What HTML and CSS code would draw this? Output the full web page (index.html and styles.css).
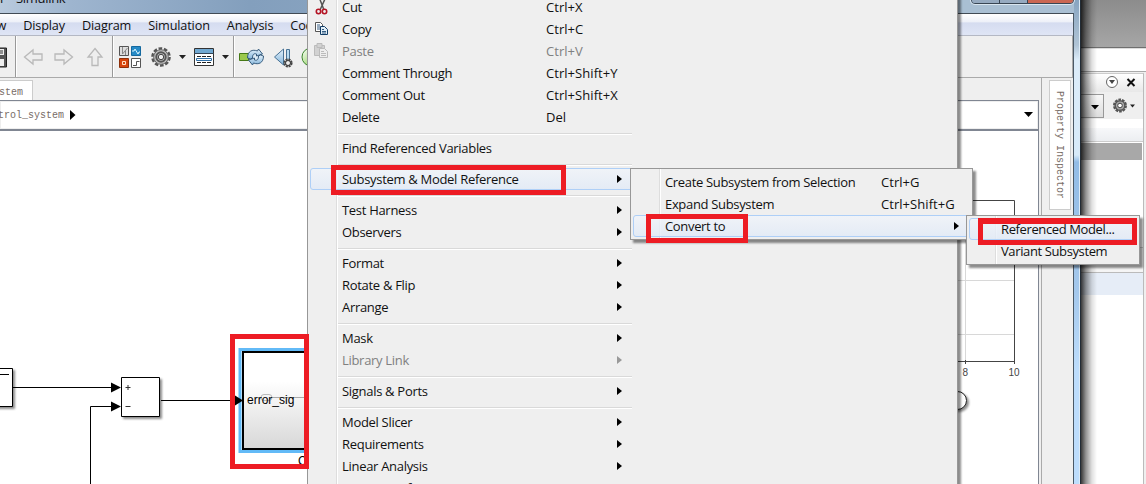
FILE: index.html
```html
<!DOCTYPE html>
<html lang="en">
<head>
<meta charset="utf-8">
<title>Simulink</title>
<link rel="stylesheet" href="styles.css">
</head>
<body>
<div class="desktop">

  <section class="back-window">
    <div class="back-title"></div>
    <div class="back-strip"></div>
    <div class="back-panel">
      <div class="panel-head">
        <svg width="34" height="18" viewBox="0 0 34 18"><circle cx="7" cy="8" r="5.500" fill="#fff" stroke="#666"/><path d="M4 6h6L7 10z" fill="#444"/><path d="M22.500 5l7 7m0-7l-7 7" stroke="#111" stroke-width="2"/></svg>
      </div>
      <div class="panel-tools">
        <div class="combo"><svg width="8" height="5"><path d="M0 0h8L4 4.500z"/></svg></div>
        <svg width="24" height="16" viewBox="0 0 24 16"><circle cx="8" cy="7.500" r="6" fill="none" stroke="#555" stroke-width="2" stroke-dasharray="2.700 1"/><circle cx="8" cy="7.500" r="4.800" fill="#aaa" stroke="#555" stroke-width="1.400"/><circle cx="8" cy="7.500" r="2.300" fill="#fff" stroke="#444"/><path d="M18 6.500h5l-2.500 3z" fill="#222"/></svg>
      </div>
      <div class="panel-gap"></div>
      <div class="panel-column"></div>
      <div class="panel-selected"></div>
      <div class="panel-body"></div>
      <div class="panel-foot"></div>
      <div class="panel-blue"></div>
    </div>
    <div class="back-shadow"></div>
  </section>

  <main class="window">
    <header class="titlebar"><span class="caption">Simulink</span><span class="caption-left">r</span>
      <div class="window-buttons"><i></i><i></i><i class="close"></i></div>
    </header>
    <div class="client">
      <nav class="menubar"><span>View</span><span>Display</span><span>Diagram</span><span>Simulation</span><span>Analysis</span><span>Code</span></nav>
      <div class="toolbar">
        <svg width="320" height="41" viewBox="0 36 320 41">
          <defs>
            <linearGradient id="green" x1="0" y1="0" x2="1" y2="1"><stop offset="0" stop-color="#fff"/><stop offset="1" stop-color="#75c737"/></linearGradient>
            <linearGradient id="blue" x1="0" y1="0" x2="0" y2="1"><stop offset="0" stop-color="#e4f2fc"/><stop offset="1" stop-color="#83b4da"/></linearGradient>
          </defs>
          <path d="M0 48h6.500v19H0" fill="#555" stroke="#222"/><path d="M0 49h4v6H0zM0 59h4v7H0z" fill="#eee"/><path d="M0 51h3M0 53h3" stroke="#333"/>
          <path d="M15.500 36v41M112.500 36v41M233.500 36v41" stroke="#999"/><path d="M16.500 36v41M113.500 36v41M234.500 36v41" stroke="#fff"/>
          <g fill="#eee" stroke="#b9b9b9" stroke-width="1.300"><path d="M24.500 57l8.500-7v4h9v6h-9v4z"/><path d="M72.500 57L64 50v4h-9v6h9v4z"/><path d="M95 48.500l7 8.500h-4v8.500h-6V57h-4z"/></g>
          <g stroke="#555"><path d="M119.500 46.500h9v9h-9z" fill="#ddd"/><path d="M131.500 46.500h9v9h-9z" fill="#268ac6" stroke="#15699f"/><path d="M119.500 58.500h9v9h-9z" fill="#d7440c" stroke="#8d300b"/><path d="M131.500 58.500h9v9h-9z" fill="#fff"/></g>
          <path d="M122.500 47v7l5-6M125.500 51v4" fill="none" stroke="#888"/><path d="M132 51h2l1-2 3 5 1-2h1" fill="none" stroke="#d9f5ff"/><path d="M122.500 61.500h3v3h-3z" fill="none" stroke="#ffe0c4"/><path d="M133 65.500h3.500v-4h3" fill="none" stroke="#555"/>
          <g fill="none"><circle cx="161" cy="57" r="8.500" stroke="#555" stroke-width="2.600" stroke-dasharray="3.600 1.740"/><circle cx="161" cy="57" r="7.300" fill="#c4c4c4" stroke="#666"/><circle cx="161" cy="57" r="4.700" stroke="#555" stroke-width="2"/><circle cx="161" cy="57" r="2.700" fill="#eee" stroke="#444"/></g>
          <path d="M179 55h7l-3.500 4zM222 55h7l-3.500 4z" fill="#222"/>
          <path d="M194.500 48.500h19v17h-19z" fill="#fff" stroke="#333"/><path d="M195 49h18v4h-18z" fill="#70a8d1"/><path d="M194 53.500h20" stroke="#345"/><path d="M197 56.500h14M197 62.500h14" stroke="#222" stroke-dasharray="4 1"/><path d="M196.500 58.500h15v2h-15z" fill="#fff" stroke="#175f9d" stroke-width=".9"/>
          <path d="M239.500 53.500h9v7h-9z" fill="#9bc84b" stroke="#467916"/>
          <circle cx="255.500" cy="57" r="5.500" fill="#dcecf7"/>
          <path d="M247.500 58c0-7 5-9 10-7l1-2 4 5-6 2 0-2c-3-1-4 1-4 4l-2 1z" fill="url(#blue)" stroke="#284f73" stroke-width=".9"/><path d="M263.500 56c0 7-5 9-10 7l-1 2-4-5 6-2v2c3 1 4-1 4-4l2-1z" fill="url(#blue)" stroke="#284f73" stroke-width=".9"/>
          <path d="M283.500 49v16l-9-8z" fill="url(#blue)" stroke="#487295"/><path d="M286.500 49.500h3v13h-3z" fill="#b9dbf0" stroke="#487295"/><circle cx="288" cy="63" r="3.500" fill="#ddd" stroke="#444" stroke-width="2.200" stroke-dasharray="2 .75"/><circle cx="288" cy="63" r="2.500" fill="#eee" stroke="#333"/>
          <circle cx="311" cy="57" r="9" fill="url(#green)" stroke="#39832b"/>
        </svg>
      </div>
      <div class="workspace">
        <div class="editor">
          <div class="tabs"><span>stem</span></div>
          <div class="breadcrumb"><span>trol_system</span><svg width="6" height="10"><path d="M0 0l5.500 5L0 10z"/></svg><svg class="drop" width="9" height="6"><path d="M0 0h9L4.500 5z"/></svg></div>
          <div class="canvas">
            <svg width="1038" height="353" viewBox="0 131 1038 353">
              <defs>
                <filter id="shadow" x="-20%" y="-20%" width="150%" height="150%"><feDropShadow dx="2" dy="2" stdDeviation="1.200" flood-opacity=".45"/></filter>
                <linearGradient id="block" x1="0" y1="0" x2="0" y2="1"><stop offset=".3" stop-color="#fff"/><stop offset="1" stop-color="#d7d7d7"/></linearGradient>
              </defs>
              <g filter="url(#shadow)" fill="#fff" stroke="#000"><path d="M-5 368.500h17.500v38H-5z"/><path d="M121.500 377.500h38v39h-38z"/></g>
              <path d="M0 374.500h9M13 387.500h99M90.500 484v-77.500H112M161 400.500h75" fill="none" stroke="#000"/>
              <path d="M111 382.500l10 5-10 5zM111 401.500l10 5-10 5z"/>
              <path d="M125.500 387.500h5M128 385v5M125.500 406.500h5" stroke="#333"/>
              <path d="M240 349.500h80v102h-80z" fill="#fff" stroke="#62baf7" stroke-width="3"/>
              <path d="M243 352h80v97h-80z" fill="url(#block)" stroke="#000" stroke-width="2"/>
              <path d="M235 395.500l8 5-8 5z"/>
              <path d="M272 397.500h35" stroke="#aaa"/><rect x="261" y="394.500" width="11" height="6" rx="3" fill="none" stroke="#bbb"/>
              <text class="block-text" x="247" y="404">error_sig</text><text class="block-text" x="298" y="465">C</text>
              <path d="M965.500 201v160M958 334.500h56M958 280.500h56" stroke="#d8d8d8"/><path d="M950 200.500h64.500v161H950M965.500 360v4M1014.500 361v3" fill="none" stroke="#444"/>
              <text class="tick" x="962.500" y="376">8</text><text class="tick" x="1008.500" y="376">10</text>
              <rect x="930" y="391.500" width="36.500" height="18" rx="9" fill="#fff" stroke="#222" filter="url(#shadow)"/>
            </svg>
          </div>
        </div>
        <aside class="sidebar"><span>Property Inspector</span></aside>
      </div>
    </div>
  </main>

  <div class="menu context">
    <div class="item"><svg class="icon" width="16" height="20" viewBox="0 0 16 20"><path d="M11 2L6 13M5 0l5 13" stroke="#555" stroke-width="1.500"/><g fill="none" stroke="#b41424" stroke-width="1.600"><circle cx="4.500" cy="14.500" r="2.200"/><circle cx="10.500" cy="14.500" r="2.200"/></g></svg><span>Cut</span><kbd>Ctrl+X</kbd></div>
    <div class="item"><svg class="icon" width="16" height="16" viewBox="0 0 16 16"><g fill="#fff" stroke="#555"><path d="M1.500 1.500h5l2 2v7h-7z"/><path d="M6.500 5.500h4l3 3v5h-7z" stroke="#123d66" fill="#e1eef7"/></g><path d="M3 4h3M3 6h3M3 8h3M8 8.500h2M8 10.500h4M8 12h4" stroke="#345d83"/></svg><span>Copy</span><kbd>Ctrl+C</kbd></div>
    <div class="item disabled"><svg class="icon" width="16" height="16" viewBox="0 0 16 16"><g fill="#d2d2d2" stroke="#bbb"><path d="M.5 2.500h10v10H.5z"/><path d="M3 .5h5v4H3z"/><path d="M5.500 5.500h5l3 3v6h-8z" fill="#eee"/></g><path d="M7 8.500h3M7 10.500h5M7 12.500h5" stroke="#bbb"/></svg><span>Paste</span><kbd>Ctrl+V</kbd></div>
    <div class="item"><span>Comment Through</span><kbd>Ctrl+Shift+Y</kbd></div>
    <div class="item"><span>Comment Out</span><kbd>Ctrl+Shift+X</kbd></div>
    <div class="item"><span>Delete</span><kbd>Del</kbd></div>
    <hr>
    <div class="item"><span>Find Referenced Variables</span></div>
    <hr>
    <div class="item more active"><span>Subsystem &amp; Model Reference</span></div>
    <hr>
    <div class="item more"><span>Test Harness</span></div>
    <div class="item more"><span>Observers</span></div>
    <hr>
    <div class="item more"><span>Format</span></div>
    <div class="item more"><span>Rotate &amp; Flip</span></div>
    <div class="item more"><span>Arrange</span></div>
    <hr>
    <div class="item more"><span>Mask</span></div>
    <div class="item more disabled"><span>Library Link</span></div>
    <hr>
    <div class="item more"><span>Signals &amp; Ports</span></div>
    <hr>
    <div class="item more"><span>Model Slicer</span></div>
    <div class="item more"><span>Requirements</span></div>
    <div class="item more"><span>Linear Analysis</span></div>
    <div class="item more last"><span>Design Verifier</span></div>
  </div>

  <div class="menu subsystem">
    <div class="item"><span>Create Subsystem from Selection</span><kbd>Ctrl+G</kbd></div>
    <div class="item"><span>Expand Subsystem</span><kbd>Ctrl+Shift+G</kbd></div>
    <div class="item more active"><span>Convert to</span></div>
  </div>
  <div class="menu convert">
    <div class="item active"><span>Referenced Model...</span></div>
    <div class="item"><span>Variant Subsystem</span></div>
  </div>

  <div class="mark mark-reference"></div>
  <div class="mark mark-convert"></div>
  <div class="mark mark-model"></div>
  <div class="mark mark-block"></div>
</div>
</body>
</html>
```
FILE: styles.css
```css
* { box-sizing: border-box; }
body { margin: 0; font-family: "Open Sans", "Noto Sans", sans-serif; color: #111; }
svg { display: block; flex: none; }
.desktop { position: relative; width: 1146px; height: 484px; overflow: hidden; background: #efefef; }

/* window behind */
.back-window { position: absolute; left: 1080px; top: 0; width: 66px; height: 484px; display: flex; flex-direction: column; background: #efefef; }
.back-title { height: 48px; background: linear-gradient(#8c8c8c, #a6a6a6); border-bottom: 1px solid #6f6f6f; }
.back-strip { height: 24px; background: #fff; border-top: 1px solid #ddd; border-bottom: 1px solid #aaa; }
.back-panel { width: 64px; margin-top: 1px; flex: 1; display: flex; flex-direction: column; border-top: 1px solid #ccc; border-right: 1px solid #bbb; background: #fff; }
.panel-head { height: 18px; padding-left: 25px; background: linear-gradient(#fff, #e8e8e8); }
.panel-tools { height: 27px; display: flex; align-items: center; gap: 8px; background: #efefef; }
.combo { width: 24px; height: 24px; padding: 10px 6px 0 10px; border: 1px solid #999; background: linear-gradient(#f7f7f7, #ddd); }
.panel-gap { height: 9px; }
.panel-column { height: 14px; background: linear-gradient(#f7f8fa, #eceef1); border-bottom: 1px solid #ccc; }
.panel-selected { height: 17px; margin: 1px 1px 0 0; background: #a8a8a8; }
.panel-body { height: 88px; border-bottom: 1px solid #ccc; }
.panel-foot { height: 25px; background: #f5f5f5; border-bottom: 1px solid #bbb; }
.panel-blue { height: 22px; background: #e6edf7; }
.back-shadow { position: absolute; inset: 0 auto 0 0; width: 17px; background: linear-gradient(90deg, rgba(0,0,0,.85), rgba(0,0,0,.42) 35%, rgba(0,0,0,.12) 70%, transparent); }

/* Simulink window */
.window { position: absolute; left: 0; top: 0; width: 1081px; height: 484px; display: flex; flex-direction: column; padding-right: 6px; background: linear-gradient(#87a4c0 0, #b0c4d6 45px, #dcecf9 60px, #d7eaf9 155px, #92bce6 162px, #a4c8ec 290px, #bdddfc 370px, #bdddfc); border-right: 1px solid #222c36; box-shadow: inset -1px 0 #dceaf5; }
.titlebar { position: relative; flex: none; height: 13px; background: linear-gradient(90deg, #b9cadd, #9eb5cf 70px, #839fbd 250px, #a9bfd3 960px, #a9bfd3); }
.caption { position: absolute; left: 16px; top: -11px; font-size: 13px; line-height: 18px; white-space: nowrap; letter-spacing: -.3px; }
.caption-left { position: absolute; left: 0; top: -11px; font-size: 13px; line-height: 18px; }
.window-buttons { position: absolute; right: 0; top: -7px; display: flex; width: 103px; height: 11px; border: 1px solid #384553; border-radius: 4px; box-shadow: 0 0 0 1px #d9e5ef; overflow: hidden; }
.window-buttons i { width: 28px; background: #96aac0; border-right: 1px solid #384553; }
.window-buttons .close { flex: 1; background: #ca6652; border: 0; }
.client { flex: 1; min-height: 0; display: flex; flex-direction: column; border-top: 1px solid #414b55; border-right: 1px solid #4b5966; background: #efefef; }
.menubar { flex: none; height: 22px; display: flex; gap: 17px; padding-top: 3px; margin-left: -21px; font-size: 12.700px; line-height: 17px; background: linear-gradient(#fff, #edf0f8 38%, #d5dcf0 42%, #dfe5f5); border-bottom: 1px solid #b4b8c4; letter-spacing: -.15px; }
.toolbar { flex: none; height: 42px; border-bottom: 1px solid #aaa; border-right: 1px solid #aaa; }
.workspace { flex: 1; min-height: 0; display: flex; }
.editor { width: 1039px; display: flex; flex-direction: column; }
.tabs { flex: none; height: 22px; padding-top: 2px; }
.tabs span { display: block; width: 33px; height: 20px; background: #fff; border: 1px solid #ccc; border-width: 1px 1px 0 0; text-indent: -1px; }
.tabs span, .breadcrumb span, .sidebar span { font: 10px/24px "Liberation Mono", monospace; color: #786d67; }
.breadcrumb { flex: none; height: 31px; display: flex; align-items: center; border: 1px solid #808692; border-width: 1px 1px 2px 0; background: #fff; padding-right: 5px; box-shadow: inset 0 0 0 1px #eee; }
.breadcrumb span { margin: 2px 0 0 -2px; width: 72px; }
.breadcrumb .drop { margin-left: auto; }
.canvas { flex: 1; background: #fff; border-right: 1px solid #808692; }
.block-text { font: 12px "Liberation Sans", Arial, sans-serif; }
.tick { font: 10px "Liberation Sans", Arial, sans-serif; fill: #444; }
.sidebar { width: 34px; margin-left: 2px; padding: 2px 0 0 7px; border-left: 1px solid #aaa; }
.sidebar span { display: block; width: 22px; height: 130px; padding-top: 10px; line-height: 18px; writing-mode: vertical-lr; background: #fff; border: 1px solid #ccc; white-space: nowrap; }

/* menus */
.menu { position: absolute; border: 1px solid #979797; padding: 2px; background: linear-gradient(90deg, transparent 28px, #ddd 28px, #ddd 29px, #fff 29px, #fff 30px, transparent 30px), #efefef; box-shadow: 3px 3px 2px rgba(0,0,0,.45); font-size: 13px; }
.item { position: relative; height: 22px; display: flex; align-items: center; padding-left: 31px; line-height: 20px; white-space: nowrap; border: 1px solid transparent; border-radius: 3px; letter-spacing: -.3px; }
.item span { flex: none; width: 204px; }
.item kbd { font: inherit; letter-spacing: .05px; }
.item.disabled { color: #808080; }
.item.active { border-color: #aecff7; background: linear-gradient(rgba(240,244,250,.8), rgba(225,234,247,.8)); }
.icon { margin: 0 12px 0 -28px; }
.more::after { content: ""; position: absolute; right: 10px; top: 6px; border: solid transparent; border-width: 4px 0 4px 5px; border-left-color: #000; }
.more.disabled::after { border-left-color: #999; }
.more.last::after { display: none; }
.menu hr { height: 2px; margin: 5px 0 2px 28px; border: 0; background: linear-gradient(#d9d9d9 50%, #fff 50%); }
.context { left: 307px; top: -7px; width: 651px; height: 500px; padding-right: 325px; }
.context .item { margin-right: -5px; }
.context .more::after { right: 14px; }
.subsystem { left: 630px; top: 168px; width: 343px; height: 72px; }
.subsystem .item span { width: 216px; letter-spacing: -.33px; }
.convert { left: 966px; top: 215px; width: 174px; height: 50px; }
.convert .item span { width: auto; letter-spacing: -.38px; }

/* red highlights */
.mark { position: absolute; border: 5px solid #ed1c24; }
.mark-reference { left: 331px; top: 165px; width: 235px; height: 30px; }
.mark-convert { left: 646px; top: 214px; width: 102px; height: 29px; }
.mark-model { left: 978px; top: 218px; width: 159px; height: 27px; border-top-width: 6px; }
.mark-block { left: 230px; top: 334px; width: 79px; height: 135px; }
```
